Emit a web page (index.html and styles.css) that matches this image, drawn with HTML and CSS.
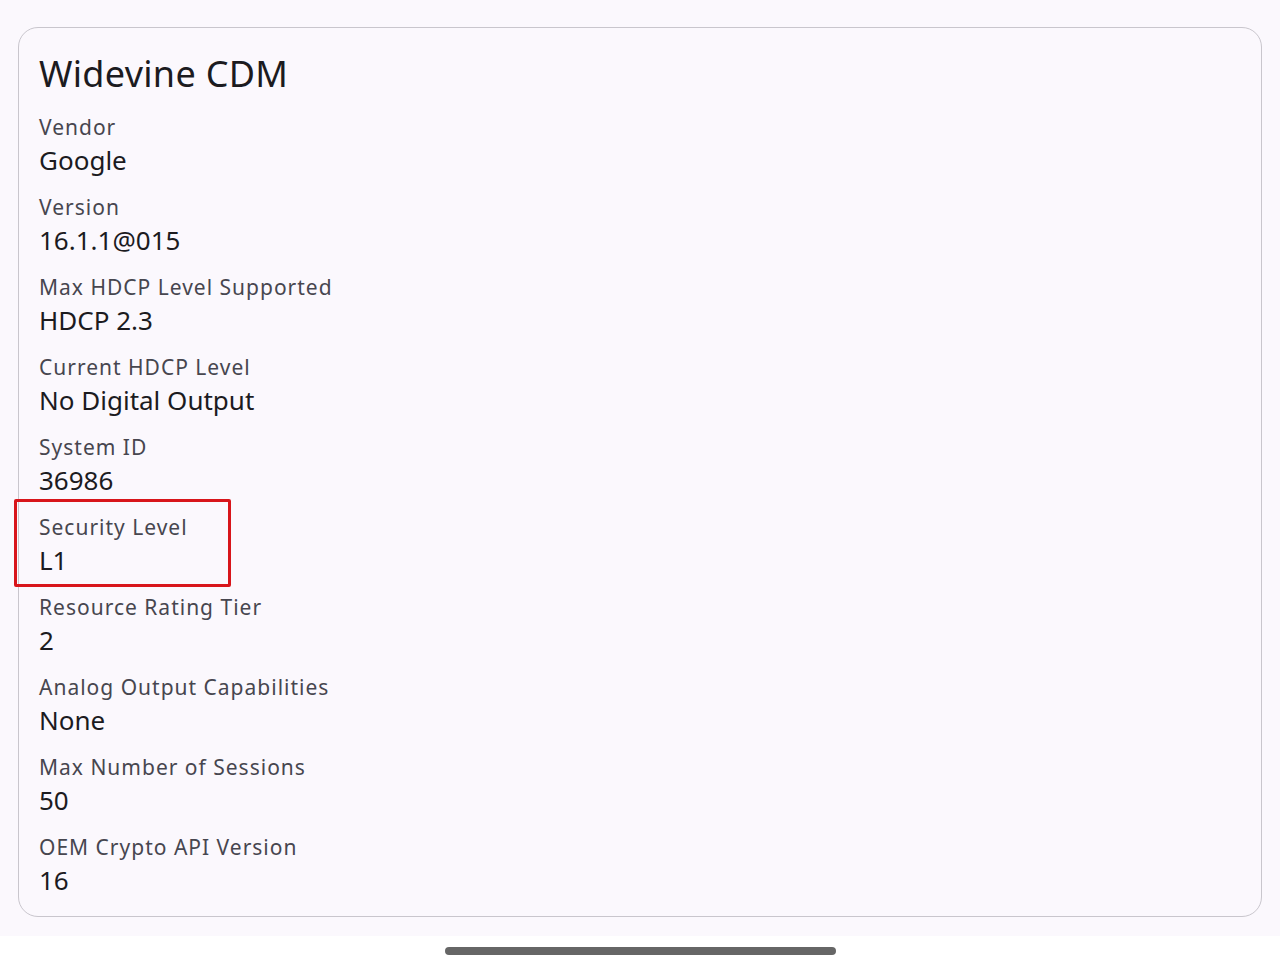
FILE: index.html
```html
<!DOCTYPE html>
<html>
<head>
<meta charset="utf-8">
<link rel="stylesheet" href="styles.css">
</head>
<body>
<div class="screen">
  <main class="content">
    <section class="card">
      <h1 class="title">Widevine CDM</h1>
      <div class="item"><div class="label">Vendor</div><div class="value">Google</div></div>
      <div class="item"><div class="label">Version</div><div class="value">16.1.1@015</div></div>
      <div class="item"><div class="label">Max HDCP Level Supported</div><div class="value">HDCP 2.3</div></div>
      <div class="item"><div class="label">Current HDCP Level</div><div class="value">No Digital Output</div></div>
      <div class="item"><div class="label">System ID</div><div class="value">36986</div></div>
      <div class="item highlighted"><div class="label">Security Level</div><div class="value">L1</div><span class="mark"></span></div>
      <div class="item"><div class="label">Resource Rating Tier</div><div class="value">2</div></div>
      <div class="item"><div class="label">Analog Output Capabilities</div><div class="value">None</div></div>
      <div class="item"><div class="label">Max Number of Sessions</div><div class="value">50</div></div>
      <div class="item"><div class="label">OEM Crypto API Version</div><div class="value">16</div></div>
    </section>
  </main>
  <div class="navbar"><div class="handle"></div></div>
</div>
</body>
</html>
```
FILE: styles.css
```css
* { box-sizing: border-box; }
html, body { margin: 0; padding: 0; }
body {
  width: 1280px;
  height: 966px;
  overflow: hidden;
  background: #ffffff;
  font-family: "Noto Sans", "Open Sans", sans-serif;
}
.screen {
  display: flex;
  flex-direction: column;
  height: 966px;
}
.content {
  height: 936px;
  background: #fbf8fd;
  padding: 27px 18px 0 18px;
}
.card {
  border: 1.5px solid #c9c6cd;
  border-radius: 20px;
  padding: 23px 20px 19px 20px;
  display: flex;
  flex-direction: column;
  gap: 14px;
}
.title {
  margin: 0;
  font-size: 36px;
  font-weight: 400;
  line-height: 46px;
  color: #1c1b1f;
  letter-spacing: 0.3px;
}
.item {
  display: flex;
  flex-direction: column;
  position: relative;
}
.label {
  font-size: 21px;
  line-height: 32px;
  color: #47464f;
  letter-spacing: 1px;
}
.value {
  font-size: 26px;
  line-height: 34px;
  color: #1c1b1f;
}
.mark {
  position: absolute;
  left: -25px;
  top: -12px;
  width: 217px;
  height: 88px;
  border: 3px solid #d8151b;
  border-radius: 2px;
}
.navbar {
  flex: 1;
  display: flex;
  justify-content: center;
  align-items: center;
  background: #ffffff;
}
.handle {
  width: 391px;
  height: 8px;
  border-radius: 4px;
  background: #666666;
}
```
